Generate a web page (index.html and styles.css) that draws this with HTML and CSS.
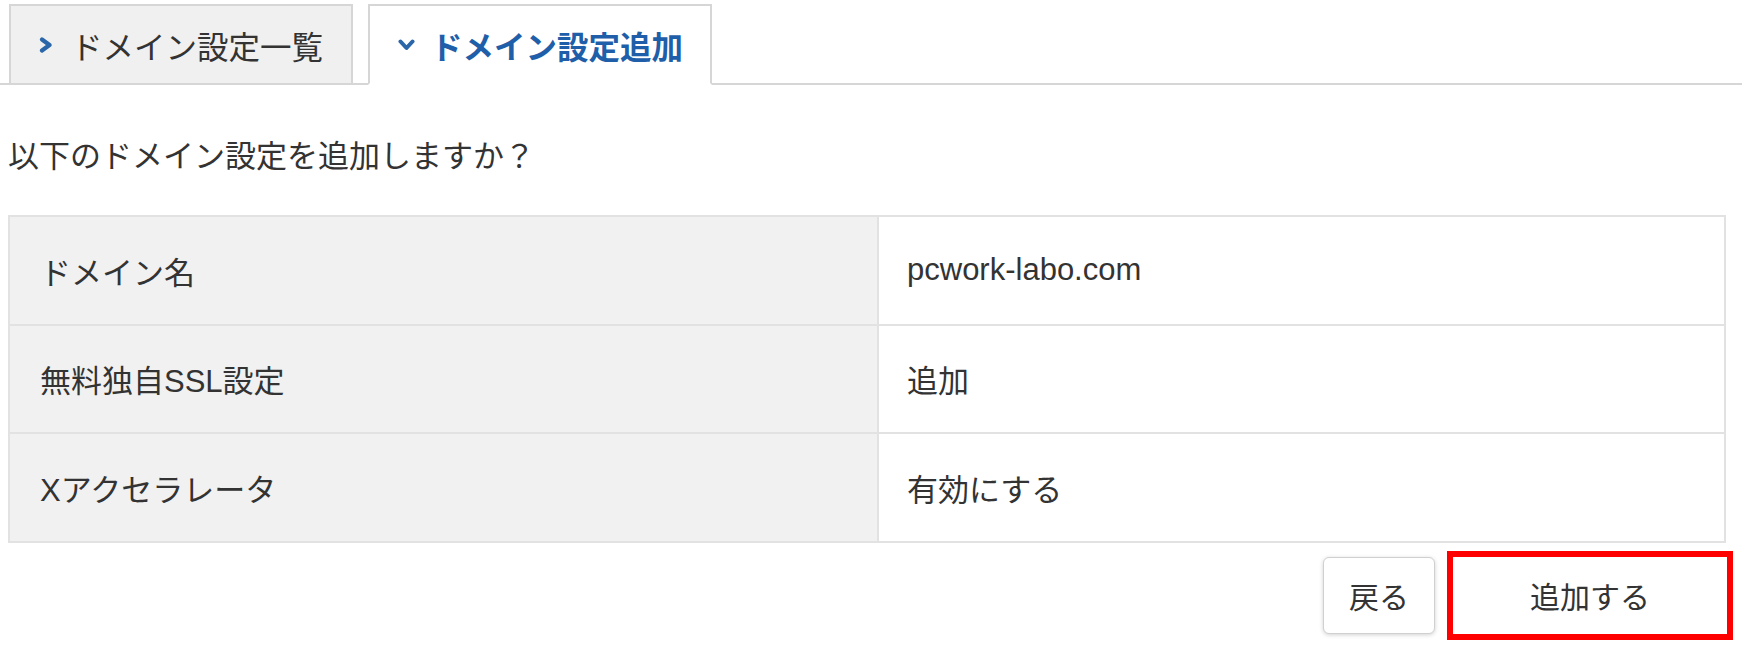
FILE: index.html
```html
<!DOCTYPE html>
<html lang="ja">
<head>
  <meta charset="UTF-8" />
  <title>ドメイン設定追加</title>
  <link rel="stylesheet" href="styles.css">
</head>
<body>
  <nav class="tabs">
    <a class="tab" href="#">
      <svg class="chev" width="14" height="16" viewBox="0 0 14 16"><path d="M3 2.5 L10.5 8 L3 13.5" fill="none" stroke="#2a66a8" stroke-width="4.2" stroke-linecap="round" stroke-linejoin="round"/></svg>
      ドメイン設定一覧
    </a>
    <a class="tab tab-active" href="#">
      <svg class="chev" width="17" height="12" viewBox="0 0 17 12"><path d="M2.5 2.5 L8.5 9 L14.5 2.5" fill="none" stroke="#2a66a8" stroke-width="4" stroke-linecap="round" stroke-linejoin="round"/></svg>
      ドメイン設定追加
    </a>
  </nav>

  <p class="lead">以下のドメイン設定を追加しますか？</p>

  <table class="confirm">
    <tr>
      <th>ドメイン名</th>
      <td>pcwork-labo.com</td>
    </tr>
    <tr>
      <th>無料独自SSL設定</th>
      <td>追加</td>
    </tr>
    <tr>
      <th>Xアクセラレータ</th>
      <td>有効にする</td>
    </tr>
  </table>

  <div class="actions">
    <button class="btn">戻る</button>
    <button class="btn btn-submit">追加する</button>
  </div>
</body>
</html>
```

FILE: styles.css
```css
:root {
  --texto: #333;
  --borda: #d6d6d6;
  --linha: #e2e2e2;
  --fundo-label: #f1f1f1;
  --azul: #1f5ea8;
}

* {
  margin: 0;
  padding: 0;
  box-sizing: border-box;
}

body {
  background: #fff;
  color: var(--texto);
  font-family: 'Liberation Sans', 'Noto Sans CJK JP', sans-serif;
  font-size: 31px;
}

.tabs {
  display: flex;
  gap: 15px;
  padding: 4px 0 0 9px;
  border-bottom: 2px solid var(--borda);
}

.tab {
  display: flex;
  align-items: center;
  gap: 18px;
  width: 344px;
  height: 81px;
  padding-left: 28px;
  margin-bottom: -2px;
  background: #f0f0f0;
  border: 2px solid var(--borda);
  color: var(--texto);
  text-decoration: none;
  font-size: 31.5px;
}

.tab-active {
  background: #fff;
  border-bottom-color: #fff;
  color: var(--azul);
  font-weight: bold;
  gap: 16px;
}

.lead {
  margin: 49px 0 0;
  padding-left: 8px;
  line-height: 45px;
}

.confirm {
  margin: 36px 0 0 8px;
  width: 1718px;
  border-collapse: collapse;
}

.confirm th,
.confirm td {
  height: 108.5px;
  padding: 0 30px;
  border: 2px solid var(--linha);
  text-align: left;
  font-weight: normal;
}

.confirm th {
  width: 869px;
  background: var(--fundo-label);
}

.confirm td {
  padding-left: 28px;
}

.actions {
  display: flex;
  justify-content: flex-end;
  align-items: center;
  gap: 12px;
  margin-top: 8px;
  padding-right: 9px;
}

.btn {
  width: 112px;
  height: 77px;
  background: #fff;
  border: 1px solid #d0d0d0;
  border-radius: 6px;
  box-shadow: 0 1px 4px rgba(0, 0, 0, 0.18);
  color: var(--texto);
  font-family: inherit;
  font-size: 30px;
}

.btn-submit {
  width: 286px;
  height: 89px;
  border: 6px solid #f00;
  border-radius: 0;
  box-shadow: none;
}
```
